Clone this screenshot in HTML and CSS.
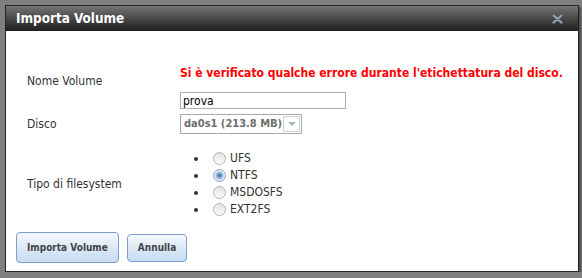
FILE: index.html
```html
<!DOCTYPE html>
<html lang="it">
<head>
    <meta charset="UTF-8">
    <title>Importa Volume</title>
    <link rel="stylesheet" href="styles.css">
</head>
<body>

    <div class="dialog">
        <div class="dialog-title">
            <span>Importa Volume</span>
            <svg class="close" width="11" height="10" viewBox="0 0 11 10">
                <path d="M1.5 1.5 L9.5 8.5 M9.5 1.5 L1.5 8.5" stroke="#4d5866" stroke-width="3.4" stroke-linecap="round"/>
                <path d="M1.5 1.5 L9.5 8.5 M9.5 1.5 L1.5 8.5" stroke="#93a3b6" stroke-width="1.8" stroke-linecap="round"/>
            </svg>
        </div>

        <div class="dialog-body">
            <form class="form-grid">
                <label class="lbl lbl-top" for="volume_name">Nome Volume</label>
                <div class="field">
                    <p class="error">Si è verificato qualche errore durante l'etichettatura del disco.</p>
                    <input type="text" id="volume_name" value="prova">
                </div>

                <label class="lbl" for="disk">Disco</label>
                <div class="field">
                    <div class="select-box">
                        <span class="select-text" id="disk">da0s1 (213.8 MB)</span>
                        <span class="select-arrow"></span>
                    </div>
                </div>

                <label class="lbl lbl-fs">Tipo di filesystem</label>
                <ul class="radio-list">
                    <li><input type="radio" name="fs" id="fs_ufs"><label for="fs_ufs">UFS</label></li>
                    <li><input type="radio" name="fs" id="fs_ntfs" checked><label for="fs_ntfs">NTFS</label></li>
                    <li><input type="radio" name="fs" id="fs_msdos"><label for="fs_msdos">MSDOSFS</label></li>
                    <li><input type="radio" name="fs" id="fs_ext2"><label for="fs_ext2">EXT2FS</label></li>
                </ul>
            </form>

            <div class="buttons">
                <button class="btn btn-main">Importa Volume</button>
                <button class="btn">Annulla</button>
            </div>
        </div>
    </div>

</body>
</html>
```

FILE: styles.css
```css
body {
    margin: 0;
    background-color: #7f7f7f;
    font-family: "DejaVu Sans Condensed", "DejaVu Sans", sans-serif;
    font-stretch: condensed;
    font-size: 12px;
    color: #333;
}

.dialog {
    width: 572px;
    height: 265px;
    margin: 5px 0 0 5px;
    border: 1px solid #262626;
    background-color: #fff;
    box-shadow: 2px 2px 2px rgba(0, 0, 0, 0.45);
    display: flex;
    flex-direction: column;
}

.dialog-title {
    height: 25px;
    padding: 0 15px 0 10px;
    display: flex;
    align-items: center;
    background: linear-gradient(#747474, #484848 50%, #1f1f1f);
    color: #fff;
    font-weight: bold;
    font-size: 13.4px;
}

.close {
    margin-left: auto;
}

.dialog-body {
    padding: 35px 0 0 21px;
    flex: 1;
}

.form-grid {
    display: grid;
    grid-template-columns: 153px auto;
    align-items: center;
    line-height: 14px;
}

.lbl-top {
    align-self: start;
    margin-top: 8px;
}

.lbl-fs {
    margin-top: 16px;
}

.error {
    margin: 0;
    color: #f00;
    font-weight: bold;
    font-size: 12px;
}

input[type="text"] {
    display: block;
    box-sizing: border-box;
    width: 166px;
    height: 17px;
    margin: 12px 0 5px;
    padding: 0 2px;
    border: 1px solid #a9b0b9;
    font-family: inherit;
    font-size: 12px;
    color: #000;
}

.select-box {
    box-sizing: border-box;
    width: 122px;
    height: 20px;
    border: 1px solid #a9a9a9;
    display: flex;
    align-items: center;
    padding: 0 1px 0 3px;
}

.select-text {
    flex: 1;
    color: #6d6d6d;
    font-weight: bold;
    font-size: 11px;
}

.select-arrow {
    width: 15px;
    height: 14px;
    border: 1px solid #cfcfcf;
    display: flex;
    align-items: center;
    justify-content: center;
}

.select-arrow::after {
    content: "";
    border-left: 4px solid transparent;
    border-right: 4px solid transparent;
    border-top: 4px solid #a6b5c8;
}

.radio-list {
    margin: 16px 0 0;
    padding-left: 28px;
}

.radio-list li {
    height: 17px;
    line-height: 17px;
}

.radio-list input {
    appearance: none;
    width: 13px;
    height: 13px;
    margin: 0 4px 0 5px;
    vertical-align: -3px;
    border: 1px solid #b4b4b4;
    border-radius: 50%;
    box-sizing: border-box;
    background: linear-gradient(#e4e4e4, #fbfbfb);
}

.radio-list input:checked {
    background: radial-gradient(circle, #3f6fa8 0, #7fa5d0 2.5px, #c9dbef 4px, #eef3f9 5.5px);
    border-color: #8aa3c0;
}

.buttons {
    display: flex;
    align-items: center;
    gap: 8px;
    margin: 14px 0 0 -11px;
}

.btn {
    height: 28px;
    padding: 0 10px;
    border: 1px solid #7b9fc9;
    border-radius: 4px;
    background: linear-gradient(#f4f8fd, #c6dbf3);
    color: #444;
    font-family: inherit;
    font-stretch: condensed;
    font-weight: bold;
    font-size: 10px;
}

.btn-main {
    height: 31px;
}
```
